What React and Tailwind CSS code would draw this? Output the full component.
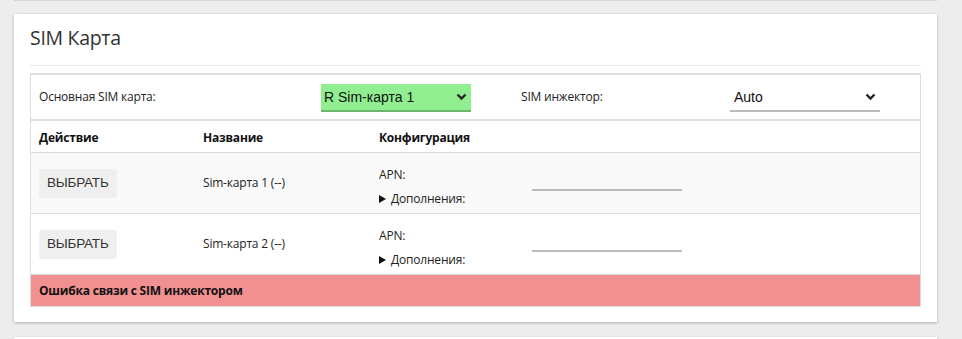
import React from 'react'

const label = "font-['Open_Sans',sans-serif] text-[12px] tracking-[-0.2px] text-[#222]"

function Chevron() {
  return (
    <svg width="11" height="8" viewBox="0 0 11 8" className="shrink-0">
      <path d="M1.5 1.5 L5.5 5.5 L9.5 1.5" fill="none" stroke="#222" strokeWidth="2.4" />
    </svg>
  )
}

function SimRow({ num, shaded }) {
  return (
    <div className={`flex h-[61px] border-b border-[#dddddd] ${shaded ? 'bg-[#f9f9f9]' : 'bg-white'}`}>
      <div className="w-[164px] pl-2 flex items-center">
        <button className="h-[29px] px-[8px] rounded-[3px] bg-[#efefef] font-['Liberation_Sans',sans-serif] text-[13.5px] tracking-[-0.2px] text-[#333]">
          ВЫБРАТЬ
        </button>
      </div>
      <div className={`w-[176px] pl-2 flex items-center ${label}`}>
        Sim-карта {num} (--)
      </div>
      <div className="flex-1 pl-2 flex">
        <div className="w-[153px] flex flex-col justify-center gap-[6px] pt-[7px]">
          <div className={label}>APN:</div>
          <div className={`${label} flex items-center gap-[5px]`}>
            <svg width="7" height="8" viewBox="0 0 7 8" className="shrink-0">
              <path d="M0 0 L7 4 L0 8 Z" fill="#111" />
            </svg>
            Дополнения:
          </div>
        </div>
        <div className="pt-[36px]">
          <div className="w-[150px] h-[2px] bg-[#bbbbbb]" />
        </div>
      </div>
    </div>
  )
}

export default function App() {
  return (
    <div className="min-h-screen bg-[#ededed] pt-[14px] relative">
      <div className="absolute top-0 left-[14px] right-[25px] h-[1px] bg-[#d6d6d6]" />
      <div className="ml-[14px] w-[923px] h-[308px] bg-white shadow-[0_1px_3px_rgba(0,0,0,0.25)] px-4 pt-[10px]">
        <h2 className="font-['Open_Sans',sans-serif] text-[19.5px] tracking-[-0.3px] text-[#333] leading-[28px] pb-[13px] border-b border-[#e8e8e8]">
          SIM Карта
        </h2>
        <div className="mt-[7px] border border-t-2 border-[#dddddd]">
          <div className="flex items-center h-[46px] border-b-2 border-[#dddddd]">
            <div className={`w-[290px] pl-2 ${label}`}>Основная SIM карта:</div>
            <div className="w-[150px] h-[28px] mt-[2px] bg-[#90ee90] border-b-2 border-[#6cb46c] flex items-center justify-between pl-[3px] pr-[4px]">
              <span className="font-['Liberation_Sans',sans-serif] text-[14px] text-[#111]">R Sim-карта 1</span>
              <Chevron />
            </div>
            <div className={`w-[259px] pl-[50px] ${label}`}>SIM инжектор:</div>
            <div className="w-[150px] h-[28px] mt-[2px] border-b-2 border-[#bbbbbb] flex items-center justify-between pl-[4px] pr-[4px]">
              <span className="font-['Liberation_Sans',sans-serif] text-[14px] text-[#111]">Auto</span>
              <Chevron />
            </div>
          </div>
          <div className="flex items-center h-[32px] pt-[2px] border-b border-[#dddddd] font-['Open_Sans',sans-serif] text-[12px] tracking-[-0.2px] font-bold text-[#111]">
            <div className="w-[164px] pl-2">Действие</div>
            <div className="w-[176px] pl-2">Название</div>
            <div className="pl-2">Конфигурация</div>
          </div>
          <SimRow num="1" shaded />
          <SimRow num="2" />
          <div className="h-[31px] bg-[#f09090] pl-2 flex items-center font-['Open_Sans',sans-serif] text-[12px] tracking-[-0.2px] font-bold text-[#111]">
            Ошибка связи с SIM инжектором
          </div>
        </div>
      </div>
      <div className="ml-[14px] mt-[15px] w-[923px] h-[10px] bg-white shadow-[0_1px_3px_rgba(0,0,0,0.25)]" />
    </div>
  )
}
